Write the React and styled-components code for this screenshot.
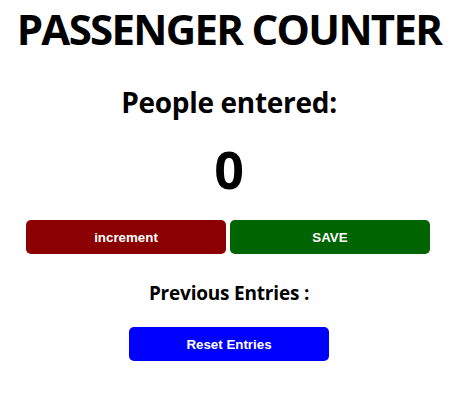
import React, { useState } from 'react';
import styled, { createGlobalStyle } from 'styled-components';

const GlobalStyle = createGlobalStyle`
  body {
    margin: 0;
    background: #fff;
    font-family: "Open Sans", "Noto Sans", sans-serif;
  }
`;

function App() {
  const [count, setCount] = useState(0);
  const [entries, setEntries] = useState([]);

  return (
    <StWrap>
      <GlobalStyle />
      <StTitle>PASSENGER COUNTER</StTitle>
      <StLabel>People entered:</StLabel>
      <StCount>{count}</StCount>
      <StRow>
        <StButton color="#8b0000" onClick={() => setCount(count + 1)}>increment</StButton>
        <StButton
          color="#006400"
          onClick={() => {
            setEntries([...entries, count]);
            setCount(0);
          }}
        >
          SAVE
        </StButton>
      </StRow>
      <StPrev>Previous Entries : {entries.join(' - ')}</StPrev>
      <StButton color="#0000ff" onClick={() => setEntries([])}>Reset Entries</StButton>
    </StWrap>
  );
}

export default App;

const StWrap = styled.div`
  display: flex;
  flex-direction: column;
  align-items: center;
`;

const StTitle = styled.h1`
  margin: 0;
  font-size: 42px;
  font-weight: 700;
  letter-spacing: -1.7px;
  white-space: nowrap;
`;

const StLabel = styled.h2`
  margin: 26px 0 0;
  font-size: 28px;
  font-weight: 700;
  letter-spacing: -0.3px;
`;

const StCount = styled.div`
  margin-top: 12px;
  font-size: 52px;
  font-weight: 700;
`;

const StRow = styled.div`
  display: flex;
  gap: 4px;
  margin-top: 16px;
  margin-right: 2px;
`;

const StButton = styled.button`
  width: 200px;
  height: 34px;
  border: none;
  border-radius: 5px;
  background-color: ${(props) => props.color};
  color: #fff;
  font-family: "Liberation Sans", Arial, sans-serif;
  font-size: 13.33px;
  font-weight: 700;
  cursor: pointer;
`;

const StPrev = styled.p`
  margin: 26px 0 21px;
  font-size: 19px;
  font-weight: 700;
  letter-spacing: -0.2px;
`;
